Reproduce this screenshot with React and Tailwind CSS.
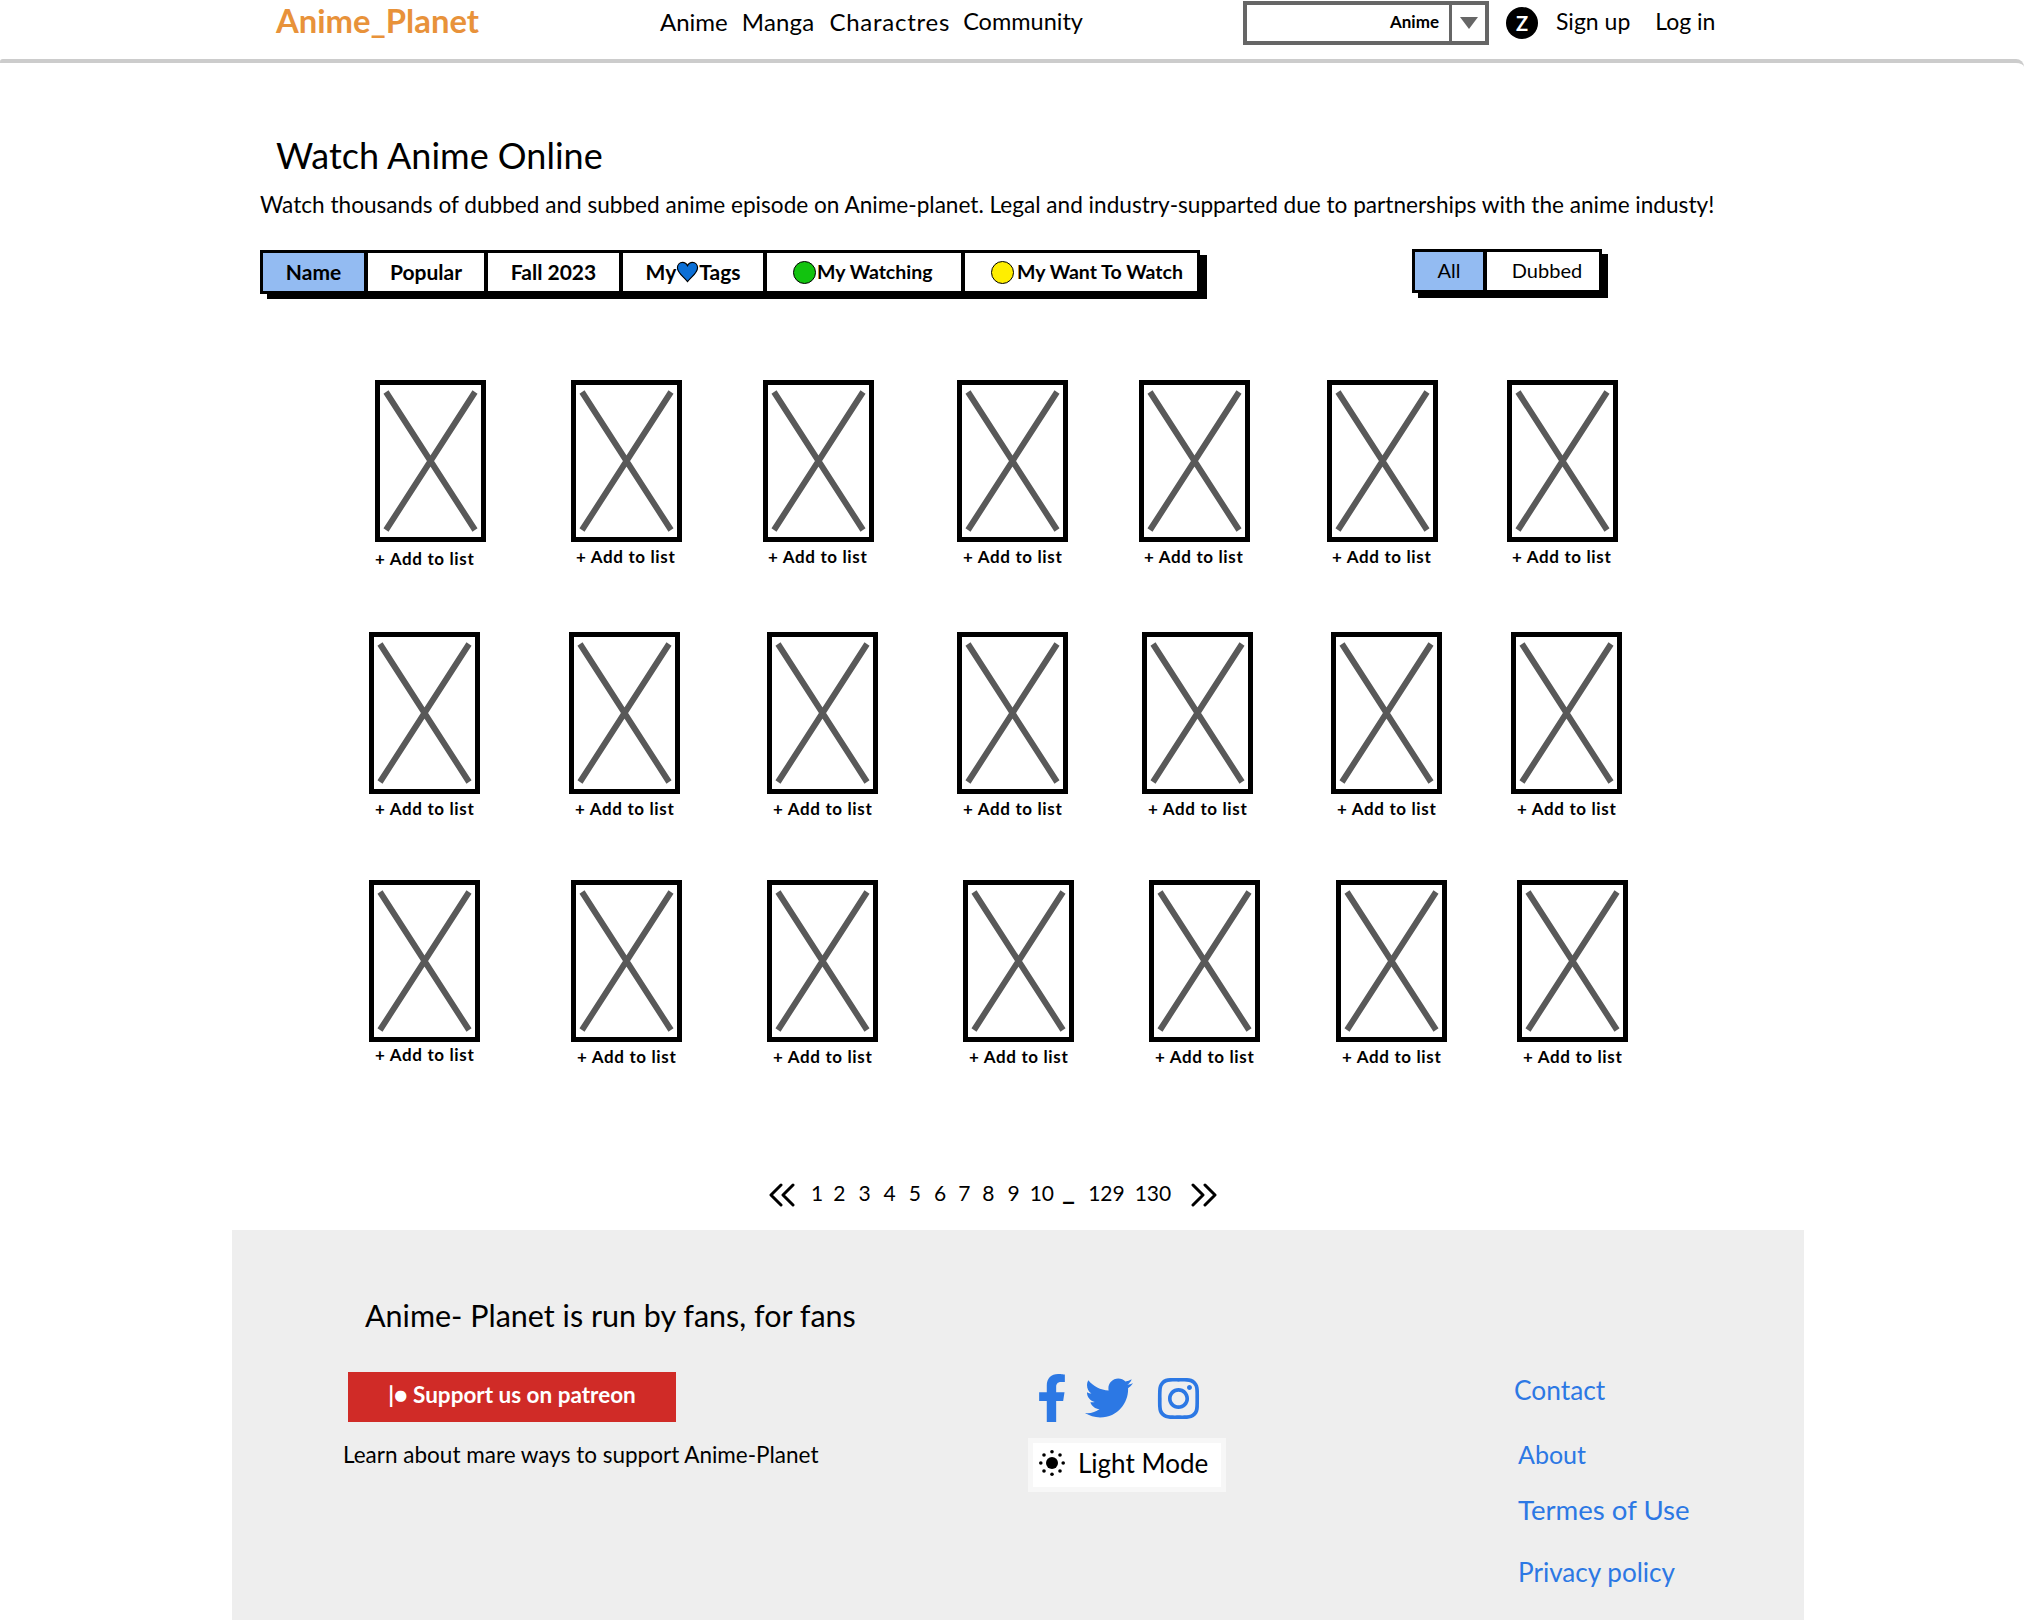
import React from "react";
import { FaFacebookF, FaTwitter, FaInstagram } from "react-icons/fa";

const rows = [
  { cls: "", cards: [["ml-[375px]","mt-[7px]"],["ml-[85px]","mt-[5px] pl-[5px]"],["ml-[81px]","mt-[5px] pl-[5px]"],["ml-[83px]","mt-[5px] pl-[6px]"],["ml-[71px]","mt-[5px] pl-[5px]"],["ml-[77px]","mt-[5px] pl-[5px]"],["ml-[69px]","mt-[5px] pl-[5px]"]] },
  { cls: "mt-[63px]", cards: [["ml-[369px]","mt-[5px] pl-[6px]"],["ml-[89px]","mt-[5px] pl-[6px]"],["ml-[87px]","mt-[5px] pl-[6px]"],["ml-[79px]","mt-[5px] pl-[6px]"],["ml-[74px]","mt-[5px] pl-[6px]"],["ml-[78px]","mt-[5px] pl-[6px]"],["ml-[69px]","mt-[5px] pl-[6px]"]] },
  { cls: "mt-[61px]", cards: [["ml-[369px]","mt-[3px] pl-[6px]"],["ml-[91px]","mt-[5px] pl-[6px]"],["ml-[85px]","mt-[5px] pl-[6px]"],["ml-[85px]","mt-[5px] pl-[6px]"],["ml-[75px]","mt-[5px] pl-[6px]"],["ml-[76px]","mt-[5px] pl-[6px]"],["ml-[70px]","mt-[5px] pl-[6px]"]] },
];

const pages = [["1","ml-[16px]"],["2","ml-[10px]"],["3","ml-[13px]"],["4","ml-[13px]"],["5","ml-[13px]"],["6","ml-[13px]"],["7","ml-[12px]"],["8","ml-[12px]"],["9","ml-[13px]"],["10","ml-[10px]"]];

function Card({ ml, label }) {
  return (
    <div className={"flex flex-col w-[111px] shrink-0 " + ml}>
      <div className="w-[111px] h-[162px] border-[5px] border-black bg-white">
        <svg viewBox="0 0 101 152" className="w-[101px] h-[152px] block">
          <path d="M6 7 L95 145 M95 7 L6 145" stroke="#595959" strokeWidth="6" fill="none" />
        </svg>
      </div>
      <div className={"h-[20px] leading-[20px] text-[17px] font-bold text-black whitespace-nowrap tracking-[0.65px] " + label}>+ Add to list</div>
    </div>
  );
}

function Chevrons({ right }) {
  return (
    <svg viewBox="0 0 27 24" className="w-[27px] h-[24px] block">
      <path d={right ? "M2 2 L12 12 L2 22 M14 2 L24 12 L14 22" : "M13 2 L3 12 L13 22 M25 2 L15 12 L25 22"} stroke="#000" strokeWidth="3" fill="none" strokeLinecap="round" strokeLinejoin="round" />
    </svg>
  );
}

function Sun() {
  return (
    <svg viewBox="0 0 26 26" className="w-[26px] h-[26px] block">
      <circle cx="13" cy="13" r="6" fill="#000" />
      <g fill="#000">
        <circle cx="13" cy="1.8" r="1.8" />
        <circle cx="13" cy="24.2" r="1.8" />
        <circle cx="1.8" cy="13" r="1.8" />
        <circle cx="24.2" cy="13" r="1.8" />
        <circle cx="5" cy="5" r="1.8" />
        <circle cx="21" cy="5" r="1.8" />
        <circle cx="5" cy="21" r="1.8" />
        <circle cx="21" cy="21" r="1.8" />
      </g>
    </svg>
  );
}

function Heart() {
  return (
    <svg viewBox="0 0 24 22" className="w-[23px] h-[22px] block">
      <path d="M12 21 C8 16 1.5 12 1.5 6.5 C1.5 3 4 1 6.8 1 C9 1 11 2.4 12 4.5 C13 2.4 15 1 17.2 1 C20 1 22.5 3 22.5 6.5 C22.5 12 16 16 12 21 Z" fill="#0b6fd6" stroke="#000" strokeWidth="1.2" />
    </svg>
  );
}

export default function App() {
  return (
    <div className="w-[2024px] h-[1620px] overflow-hidden bg-white text-black font-['Lato','Liberation_Sans',sans-serif]">
      <header className="h-[46px] flex items-center pl-[276px]">
        <div className="w-[384px] pb-[3px] text-[32.8px] font-bold text-[#e8923a] leading-none whitespace-nowrap">Anime_Planet</div>
        <nav className="flex items-center pb-[2px] text-[24px] whitespace-nowrap w-[583px]">
          <span>Anime</span>
          <span className="ml-[14px] tracking-[0.2px]">Manga</span>
          <span className="ml-[15px] tracking-[0.75px]">Charactres</span>
          <span className="ml-[13px] text-[23.5px]">Community</span>
        </nav>
        <div className="w-[246px] h-[44px] flex border-4 border-[#666666] bg-white">
          <div className="w-[205px] flex items-center justify-end pr-[10px] pb-[2px] text-[17px] font-bold border-r-[3px] border-[#666666]">Anime</div>
          <div className="flex-1 flex items-center justify-center">
            <svg viewBox="0 0 18 12" className="w-[18px] h-[12px] block"><path d="M0 0 H18 L9 12 Z" fill="#666666" /></svg>
          </div>
        </div>
        <div className="ml-[17px] w-[32px] h-[32px] rounded-full bg-black text-white flex items-center justify-center text-[20px] font-bold">Z</div>
        <span className="ml-[18px] pb-[3px] text-[23px]">Sign up</span>
        <span className="ml-[25px] pb-[3px] text-[23px]">Log in</span>
      </header>
      <div className="mt-[13px] h-[8px] -mb-[4px] border-t-4 border-[#cccccc] rounded-tl-[8px] rounded-tr-[24px]" />

      <h1 className="mt-[70px] ml-[276px] h-[44px] leading-[44px] text-[36px] font-normal whitespace-nowrap">Watch Anime Online</h1>
      <p className="mt-[13px] ml-[260px] h-[30px] leading-[30px] text-[22.6px] whitespace-nowrap">Watch thousands of dubbed and subbed anime episode on Anime-planet. Legal and industry-supparted due to partnerships with the anime industy!</p>

      <div className="mt-[30px] ml-[260px] flex items-start">
        <div className="w-[940px] h-[44px] flex border-[3px] border-black bg-white shadow-[7px_5px_0_#000] text-[21px] font-bold whitespace-nowrap">
          <div className="w-[105px] flex items-center justify-center bg-[#93bbf2] border-r-4 border-black">Name</div>
          <div className="w-[120px] flex items-center justify-center border-r-4 border-black">Popular</div>
          <div className="w-[135px] flex items-center justify-center border-r-4 border-black">Fall 2023</div>
          <div className="w-[144px] flex items-center justify-center border-r-4 border-black">My<Heart />Tags</div>
          <div className="w-[198px] flex items-center border-r-4 border-black pl-[26px] text-[19.5px]">
            <span className="w-[23px] h-[23px] rounded-full bg-[#12c30f] border border-black mr-[1px]" />My Watching
          </div>
          <div className="flex-1 flex items-center pl-[26px] text-[19.5px]">
            <span className="w-[23px] h-[23px] rounded-full bg-[#ffee00] border border-black mr-[3px]" />My Want To Watch
          </div>
        </div>
        <div className="ml-[212px] -mt-[1px] w-[190px] h-[44px] flex border-[3px] border-black bg-white shadow-[6px_5px_0_#000] text-[20px]">
          <div className="w-[72px] flex items-center justify-center pb-[2px] bg-[#93bbf2] border-r-4 border-black">All</div>
          <div className="flex-1 flex items-center justify-center pb-[2px] pl-[8px]">Dubbed</div>
        </div>
      </div>

      <div className="mt-[86px]">
        {rows.map((row, r) => (
          <div key={r} className={"flex items-start " + row.cls}>
            {row.cards.map((c, i) => <Card key={i} ml={c[0]} label={c[1]} />)}
          </div>
        ))}
      </div>

      <div className="mt-[113px] h-[30px] flex items-center pl-[768px] text-[21px] whitespace-nowrap">
        <Chevrons />
        {pages.map((p) => <span key={p[0]} className={"pb-[5px] " + p[1]}>{p[0]}</span>)}
        <span className="ml-[8px] text-[28px] font-bold leading-none pb-[12px]">_</span>
        <span className="ml-[13px] pb-[5px]">129</span>
        <span className="ml-[10px] pb-[5px]">130</span>
        <span className="ml-[20px]"><Chevrons right /></span>
      </div>

      <footer className="mt-[20px] mx-[232px] w-[1572px] h-[390px] bg-[#eeeeee] flex pl-[111px]">
        <div className="w-[685px] shrink-0 pt-[65px]">
          <div className="ml-[22px] h-[40px] leading-[40px] text-[30.5px] whitespace-nowrap">Anime- Planet is run by fans, for fans</div>
          <div className="mt-[37px] ml-[5px] w-[328px] h-[50px] bg-[#d02b27] text-white flex items-center justify-center pb-[4px] text-[22.5px] font-bold">|● Support us on patreon</div>
          <div className="mt-[18px] h-[30px] leading-[30px] text-[22.5px] whitespace-nowrap">Learn about mare ways to support Anime-Planet</div>
        </div>
        <div className="w-[486px] shrink-0 pt-[144px]">
          <div className="flex items-center h-[48px] text-[#2c78e4]">
            <FaFacebookF className="ml-[9px] w-[30px] h-[48px]" />
            <FaTwitter className="ml-[18px] w-[48px] h-[48px]" />
            <FaInstagram className="ml-[22px] w-[47px] h-[47px]" />
          </div>
          <div className="mt-[16px] w-[198px] h-[54px] border-[5px] border-[#f7f7f7] bg-white flex items-center pl-[6px] pb-[4px] whitespace-nowrap">
            <Sun />
            <span className="ml-[13px] text-[26px]">Light Mode</span>
          </div>
        </div>
        <div className="pt-[142px] text-[#2c78e4] whitespace-nowrap">
          <div className="h-[36px] leading-[36px] text-[26.3px]">Contact</div>
          <div className="mt-[28px] ml-[4px] h-[36px] leading-[36px] text-[25px]">About</div>
          <div className="mt-[20px] ml-[4px] h-[36px] leading-[36px] text-[27.6px]">Termes of Use</div>
          <div className="mt-[26px] ml-[4px] h-[36px] leading-[36px] text-[26.1px]">Privacy policy</div>
        </div>
      </footer>
    </div>
  );
}
